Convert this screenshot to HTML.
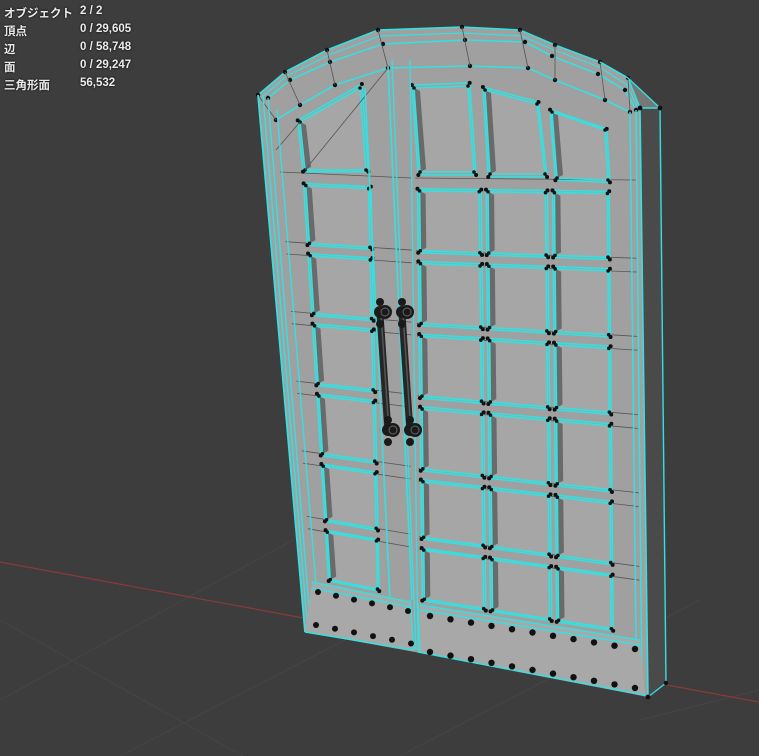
<!DOCTYPE html>
<html><head><meta charset="utf-8">
<style>
html,body{margin:0;padding:0;background:#3d3d3d;}
#wrap{position:relative;width:759px;height:756px;overflow:hidden;background:#3d3d3d;}
svg{position:absolute;left:0;top:0;}
.st{position:absolute;left:4px;font:bold 11.5px "Liberation Sans","Noto Sans CJK JP",sans-serif;color:#ececec;text-shadow:0 0 2px #000;}
.st b{position:absolute;left:76px;white-space:nowrap;}
</style></head><body>
<div id="wrap">
<svg id="s" width="759" height="756" viewBox="0 0 759 756">
<g stroke="#454545" stroke-width="1">
<line x1="0" y1="700" x2="330" y2="520"/><line x1="120" y1="756" x2="500" y2="560"/>
<line x1="400" y1="756" x2="700" y2="600"/><line x1="0" y1="620" x2="250" y2="760"/>
<line x1="640" y1="720" x2="759" y2="690"/>
</g>
<line x1="0" y1="562" x2="759" y2="702" stroke="#8a3a3a" stroke-width="1.2"/>
<!-- side face -->
<polygon points="600,62 628,78 660,108 640,108" fill="#777"/>
<polygon points="640,108 660,108 666,683 648,697" fill="#4a4a4a"/>
<!-- front face -->
<polygon points="258,95 285,72 327,50 378,30 462,27 520,30 555,45 600,62 628,78 640,108 648,697 415,652 305,632" fill="#a0a0a0"/>
<g id="g"></g>
</svg>
<div class="st" style="top:5px">オブジェクト<b>2 / 2</b></div>
<div class="st" style="top:23px">頂点<b>0 / 29,605</b></div>
<div class="st" style="top:41px">辺<b>0 / 58,748</b></div>
<div class="st" style="top:59px">面<b>0 / 29,247</b></div>
<div class="st" style="top:77px">三角形面<b>56,532</b></div>
</div>
<script>
var g=document.getElementById('g'),NS='http://www.w3.org/2000/svg',C='#36e0e0';
function el(t,a){var e=document.createElementNS(NS,t);for(var k in a)e.setAttribute(k,a[k]);g.appendChild(e);return e;}
function pl(p,a){a.points=p.map(function(q){return q[0].toFixed(1)+','+q[1].toFixed(1)}).join(' ');return el('polygon',a);}
function ln(a,b,s,w){el('line',{x1:a[0],y1:a[1],x2:b[0],y2:b[1],stroke:s,'stroke-width':w||1});}
function dot(p,r){el('circle',{cx:p[0],cy:p[1],r:r||2.2,fill:'#111'});}
function bl(c,u,v){var a=[c[0][0]+(c[1][0]-c[0][0])*u,c[0][1]+(c[1][1]-c[0][1])*u],b=[c[2][0]+(c[3][0]-c[2][0])*u,c[2][1]+(c[3][1]-c[2][1])*u];return [a[0]+(b[0]-a[0])*v,a[1]+(b[1]-a[1])*v];}
function panel(p){
 pl(p,{fill:'#a6a6a6'});
 pl([p[0],[p[0][0]+6,p[0][1]+3],[p[3][0]+6,p[3][1]-3],p[3]],{fill:'#6a6a6a'});
 pl(p,{fill:'none',stroke:C,'stroke-width':1.6});
 var o=p.map(function(q){var cx=(p[0][0]+p[2][0])/2,cy=(p[0][1]+p[2][1])/2;return [q[0]+(q[0]-cx)*0.07,q[1]+(q[1]-cy)*0.07];});
 pl(o,{fill:'none',stroke:C,'stroke-width':1.5});
 p.forEach(function(q){dot(q,1.8)});o.forEach(function(q){dot(q,2)});
}
var rows=[[0.03,0.17],[0.2,0.34],[0.37,0.51],[0.54,0.68],[0.71,0.84],[0.87,0.985]];
var L=[[280,172],[412,178],[312,582],[410,602]];
var R=[[415,178],[636,180],[420,605],[640,640]];
[L,R].forEach(function(c){rows.forEach(function(r){[r[0]-0.03,r[1]+0.03].forEach(function(v){ln(bl(c,0,v),bl(c,1,v),'#555',0.8)});});});
rows.forEach(function(r){
 panel([bl(L,0.19,r[0]),bl(L,0.67,r[0]),bl(L,0.67,r[1]),bl(L,0.19,r[1])]);
 [[0.02,0.29],[0.33,0.59],[0.63,0.87]].forEach(function(c){panel([bl(R,c[0],r[0]),bl(R,c[1],r[0]),bl(R,c[1],r[1]),bl(R,c[0],r[1])]);});
});
panel([[300,122],[360,88],[366,170],[305,170]]);
panel([[414,88],[468,86],[474,172],[420,172]]);
panel([[485,90],[537,104],[545,174],[490,174]]);
panel([[552,112],[605,130],[608,180],[557,178]]);
var arch=[[258,95],[285,72],[327,50],[378,30],[462,27],[520,30],[555,45],[600,62],[628,78],[640,108]];
var arch2=[[268,98],[290,80],[330,62],[383,44],[465,40],[525,42],[552,56],[598,74],[625,90],[636,110]];
var arch3=[[276,120],[300,105],[335,85],[388,68],[470,66],[528,68],[555,80],[605,100],[630,112]];
[arch,arch2,arch3].forEach(function(a){el('polyline',{points:a.map(function(q){return q.join(',')}).join(' '),fill:'none',stroke:C,'stroke-width':1.6});a.forEach(function(q){dot(q,2.2)});});
el('polyline',{points:'262,97 287,76 329,55 380,36 463,33 522,36 554,50 599,67 626,84 638,108',fill:'none',stroke:C,'stroke-width':1.2});
for(var i=0;i<arch3.length;i++)ln(arch[i],arch3[i],'#555',0.8);
ln([388,68],[305,170],'#555',0.8);ln([276,150],[300,122],'#555',0.8);
ln([365,88],[390,600],C,1.6);ln([388,66],[412,600],C,1.6);ln([392,60],[416,650],C,1.3);ln([410,60],[418,650],C,1.3);
ln([258,95],[305,632],C,1.8);ln([263,96],[308,632],C,1.4);ln([268,98],[311,632],C,1.4);ln([277,110],[316,585],C,1.4);
ln([630,112],[636,640],C,1.5);ln([636,110],[642,692],C,1.5);ln([640,108],[648,697],C,1.6);ln([660,108],[666,683],C,1.4);ln([666,683],[648,697],C,1.3);
ln([640,108],[660,108],C,1.4);ln([628,78],[660,108],C,1.3);ln([600,62],[628,78],C,1.3);
dot([660,108],2.4);dot([640,108],2.4);dot([648,697],2.4);dot([666,683],2.2);
pl([[312,582],[410,602],[414,650],[305,632]],{fill:'#a8a8a8'});
pl([[420,605],[640,640],[645,695],[418,652]],{fill:'#a8a8a8'});
[[[312,582],[410,602]],[[312,588],[410,607]],[[305,632],[414,650]],[[420,605],[640,640]],[[420,610],[640,645]],[[418,652],[645,695]]].forEach(function(s){ln(s[0],s[1],C,1.5)});
ln([410,600],[414,650],C,1.4);ln([418,602],[420,652],C,1.4);
for(i=0;i<6;i++){dot([318+i*18,592+i*3.8],3);dot([316+i*19,625+i*3.7],3);}
for(i=0;i<11;i++){dot([430+i*20.5,616+i*3.3],3.2);dot([430+i*20.5,652+i*3.6],3.2);}
function handle(x1,y1,x2,y2){
 el('line',{x1:x1,y1:y1,x2:x2,y2:y2,stroke:'#262626','stroke-width':7});
 el('line',{x1:x1+1,y1:y1,x2:x2+1,y2:y2,stroke:'#555','stroke-width':1.5});
 [[x1,y1],[x2,y2]].forEach(function(p){el('circle',{cx:p[0],cy:p[1]-2,r:6,fill:'#1a1a1a'});el('circle',{cx:p[0]+5,cy:p[1]-2,r:7,fill:'#1a1a1a'});el('circle',{cx:p[0]+5,cy:p[1]-2,r:4,fill:'none',stroke:'#666','stroke-width':1});el('circle',{cx:p[0],cy:p[1]-12,r:4,fill:'#1a1a1a'});el('circle',{cx:p[0],cy:p[1]+10,r:4,fill:'#1a1a1a'});});
}
handle(380,314,388,432);handle(402,314,410,432);
</script>
</body></html>
